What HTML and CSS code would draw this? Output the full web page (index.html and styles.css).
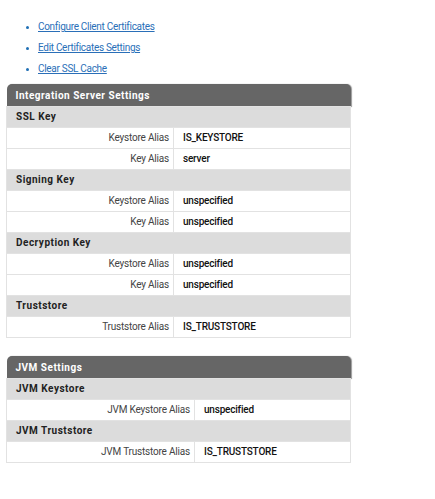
FILE: index.html
```html
<!DOCTYPE html>
<html>
<head>
<meta charset="utf-8">
<link rel="stylesheet" href="styles.css">
</head>
<body>
<ul class="links">
  <li><a href="#">Configure Client Certificates</a></li>
  <li><a href="#">Edit Certificates Settings</a></li>
  <li><a href="#">Clear SSL Cache</a></li>
</ul>

<table class="settings is">
  <colgroup><col class="c1"><col></colgroup>
  <tr><th colspan="2" class="head">Integration Server Settings</th></tr>
  <tr><td colspan="2" class="sub">SSL Key</td></tr>
  <tr><td class="label">Keystore Alias</td><td class="val">IS_KEYSTORE</td></tr>
  <tr><td class="label">Key Alias</td><td class="val">server</td></tr>
  <tr><td colspan="2" class="sub">Signing Key</td></tr>
  <tr><td class="label">Keystore Alias</td><td class="val">unspecified</td></tr>
  <tr><td class="label">Key Alias</td><td class="val">unspecified</td></tr>
  <tr><td colspan="2" class="sub">Decryption Key</td></tr>
  <tr><td class="label">Keystore Alias</td><td class="val">unspecified</td></tr>
  <tr><td class="label">Key Alias</td><td class="val">unspecified</td></tr>
  <tr><td colspan="2" class="sub">Truststore</td></tr>
  <tr><td class="label">Truststore Alias</td><td class="val">IS_TRUSTSTORE</td></tr>
</table>

<table class="settings jvm">
  <colgroup><col class="c1"><col></colgroup>
  <tr><th colspan="2" class="head">JVM Settings</th></tr>
  <tr><td colspan="2" class="sub">JVM Keystore</td></tr>
  <tr><td class="label">JVM Keystore Alias</td><td class="val">unspecified</td></tr>
  <tr><td colspan="2" class="sub">JVM Truststore</td></tr>
  <tr><td class="label">JVM Truststore Alias</td><td class="val">IS_TRUSTSTORE</td></tr>
</table>
</body>
</html>
```
FILE: styles.css
```css
body {
  margin: 0;
  padding: 0 6px;
  font-family: Roboto, "Liberation Sans", sans-serif;
  font-size: 10px;
  color: #333;
  background: #fff;
}
.links {
  margin: 0;
  padding: 17px 0 0 32px;
  list-style: disc;
  color: #1f6fb5;
}
.links li {
  height: 21px;
  line-height: 20px;
  font-size: 10px;
  letter-spacing: -0.3px;
}
.links li::marker { font-size: 9px; }
.links a {
  color: #2a6fb8;
  text-decoration: underline;
}
.settings {
  width: 345px;
  border-collapse: collapse;
  table-layout: fixed;
}
.is { margin-top: 4px; }
.jvm { margin-top: 18px; }
.is .c1 { width: 167px; }
.jvm .c1 { width: 188px; }
.head {
  height: 22px;
  padding: 0 9px;
  background: #666;
  color: #fff;
  text-align: left;
  font-weight: 700;
  font-size: 10px;
  letter-spacing: 0.5px;
  border-radius: 5px 5px 0 0;
  box-shadow: 1px 0 1px #999;
}
.sub {
  height: 20px;
  line-height: 12px;
  padding: 0 9px;
  background: #dcdcdc;
  color: #222;
  font-weight: 700;
  letter-spacing: 0.5px;
  border: 1px solid #e2e2e2;
}
.label, .val {
  height: 20px;
  line-height: 12px;
  border: 1px solid #e2e2e2;
  padding: 0 9px;
  letter-spacing: -0.2px;
}
.label {
  text-align: right;
  padding-right: 4px;
  color: #444;
}
.val {
  font-weight: 500;
  color: #111;
}
```
